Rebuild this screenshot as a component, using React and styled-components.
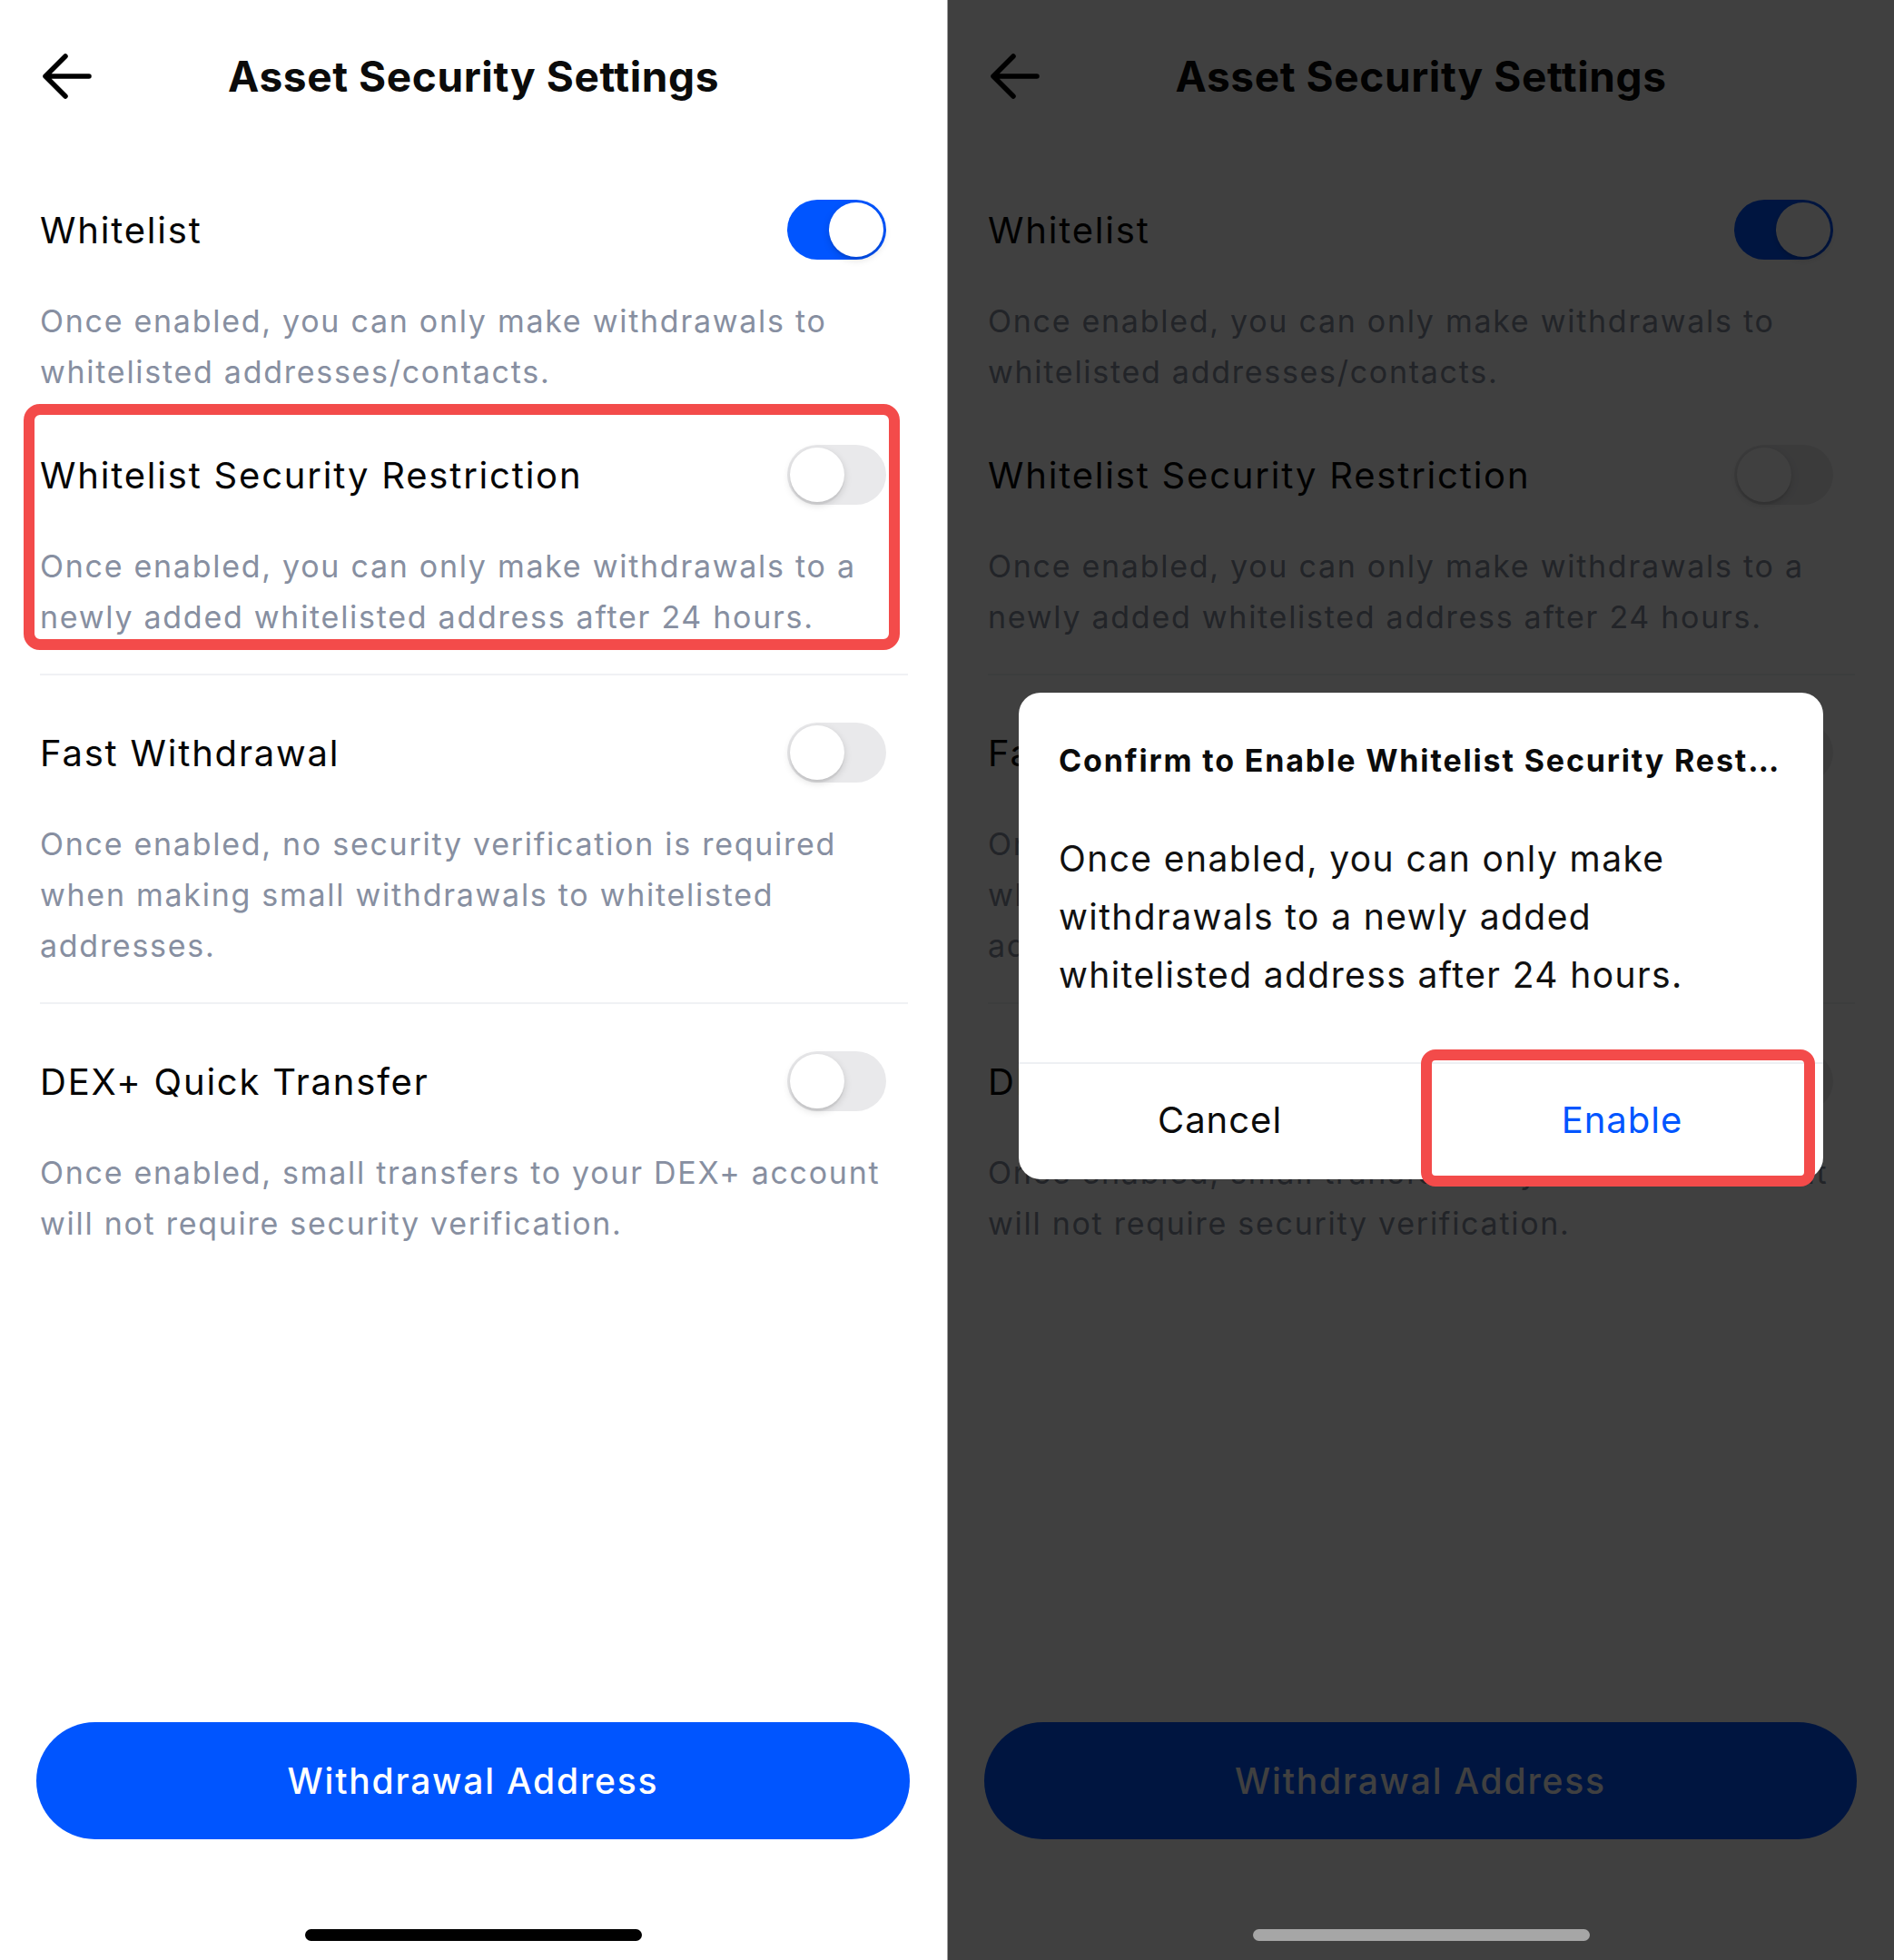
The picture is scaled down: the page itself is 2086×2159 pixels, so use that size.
import React from "react";
import styled, { createGlobalStyle } from "styled-components";

const GlobalStyle = createGlobalStyle`
  html, body {
    margin: 0;
    padding: 0;
  }
  body {
    font-family: Inter, "Noto Sans", sans-serif;
    background: #fff;
    -webkit-font-smoothing: antialiased;
  }
`;

const Page = styled.div`
  display: flex;
  width: 2086px;
  height: 2159px;
  overflow: hidden;
`;

const Panel = styled.div`
  position: relative;
  flex-shrink: 0;
  width: ${p => p.$width}px;
  height: 100%;
  display: flex;
  flex-direction: column;
  background: #fff;
  border-right: ${p => (p.$edge ? "1px solid #a3a3a3" : "none")};
`;

const Header = styled.header`
  height: 168px;
  display: grid;
  grid-template-columns: 1fr auto 1fr;
  align-items: center;
  padding: 0 44px;
`;

const BackButton = styled.button`
  justify-self: start;
  display: flex;
  padding: 0;
  border: none;
  background: none;
  color: #000;
`;

const Title = styled.h1`
  margin: 0;
  font-size: 46px;
  font-weight: 700;
  color: #0b0b0b;
  letter-spacing: 0.6px;
`;

const Content = styled.main`
  padding: 0 43px 0 44px;
`;

const Group = styled.div`
  padding-bottom: 34px;
  border-bottom: ${p => (p.$divider ? "2px solid #f0f1f4" : "none")};
`;

const Section = styled.section`
  position: relative;
  padding-top: 52px;
`;

const Row = styled.div`
  height: 66px;
  display: flex;
  align-items: center;
  justify-content: space-between;
`;

const Label = styled.span`
  font-size: 40px;
  color: #050505;
  letter-spacing: 1.8px;
`;

const Toggle = styled.div`
  position: relative;
  flex-shrink: 0;
  width: 109px;
  height: 66px;
  margin-right: 24px;
  border-radius: 33px;
  background: ${p => (p.$on ? "#0055ff" : "#e9e9eb")};

  &::after {
    content: "";
    position: absolute;
    top: 3px;
    left: ${p => (p.$on ? "46px" : "3px")};
    width: 60px;
    height: 60px;
    border-radius: 50%;
    background: #fff;
    box-shadow: 0 3px 8px rgba(0, 0, 0, 0.15), 0 3px 1px rgba(0, 0, 0, 0.06);
  }
`;

const Description = styled.p`
  margin: 40px 0 0;
  padding-right: 20px;
  font-size: 34px;
  line-height: 56px;
  color: #878fa1;
  letter-spacing: 1.72px;
`;

const Highlight = styled.div`
  position: absolute;
  inset: ${p => p.$inset};
  border: 12px solid #f34b4a;
  border-radius: ${p => p.$radius}px;
  pointer-events: none;
`;

const Spacer = styled.div`
  flex: 1;
`;

const PrimaryButton = styled.button`
  height: 129px;
  margin: 0 41px 0 40px;
  border: none;
  border-radius: 65px;
  background: #0055ff;
  color: #fff;
  font-family: inherit;
  font-size: 39px;
  font-weight: 500;
  letter-spacing: 1.8px;
`;

const Footer = styled.footer`
  height: 133px;
  display: flex;
  justify-content: center;
`;

const HomeBar = styled.div`
  position: relative;
  z-index: 2;
  width: 371px;
  height: 13px;
  margin-top: 99px;
  border-radius: 7px;
  background: ${p => (p.$dim ? "#a6a6a6" : "#000")};
`;

const Overlay = styled.div`
  position: absolute;
  inset: 0;
  z-index: 1;
  display: flex;
  justify-content: center;
  align-items: flex-start;
  padding-top: 763px;
  background: rgba(0, 0, 0, 0.75);
`;

const Dialog = styled.div`
  width: 886px;
  background: #fff;
  border-radius: 24px;
`;

const DialogBody = styled.div`
  padding: 53px 46px 64px 44px;
`;

const DialogTitle = styled.div`
  font-size: 34px;
  font-weight: 700;
  line-height: 44px;
  color: #0b0b0b;
  letter-spacing: 1.85px;
  white-space: nowrap;
  overflow: hidden;
  text-overflow: ellipsis;
`;

const DialogText = styled.p`
  max-width: 760px;
  margin: 54px 0 0;
  font-size: 39px;
  line-height: 64px;
  color: #111;
  letter-spacing: 1.4px;
`;

const DialogActions = styled.div`
  display: grid;
  grid-template-columns: 1fr 1fr;
  height: 127px;
  border-top: 2px solid #eef0f3;
`;

const DialogButton = styled.button`
  position: relative;
  padding: 0 0 5px;
  border: none;
  background: none;
  font-family: inherit;
  font-size: 40px;
  letter-spacing: 1px;
  color: ${p => (p.$primary ? "#0055ff" : "#0b0b0b")};
`;

const BackArrow = () => (
  <svg width="60" height="50" viewBox="0 0 60 50" fill="none">
    <path
      d="M6 25H54M28 3L6 25L28 47"
      stroke="currentColor"
      strokeWidth="5.5"
      strokeLinecap="round"
      strokeLinejoin="round"
    />
  </svg>
);

const settings = [
  [
    {
      label: "Whitelist",
      on: true,
      text: "Once enabled, you can only make withdrawals to whitelisted addresses/contacts."
    },
    {
      label: "Whitelist Security Restriction",
      on: false,
      marked: true,
      text: "Once enabled, you can only make withdrawals to a newly added whitelisted address after 24 hours."
    }
  ],
  [
    {
      label: "Fast Withdrawal",
      on: false,
      text: "Once enabled, no security verification is required when making small withdrawals to whitelisted addresses."
    }
  ],
  [
    {
      label: "DEX+ Quick Transfer",
      on: false,
      text: "Once enabled, small transfers to your DEX+ account will not require security verification."
    }
  ]
];

const Screen = ({ annotated, dimmed }) => (
  <>
    <Header>
      <BackButton aria-label="Back">
        <BackArrow />
      </BackButton>
      <Title>Asset Security Settings</Title>
    </Header>
    <Content>
      {settings.map((group, i) => (
        <Group key={i} $divider={i < settings.length - 1}>
          {group.map(item => (
            <Section key={item.label}>
              <Row>
                <Label>{item.label}</Label>
                <Toggle $on={item.on} />
              </Row>
              <Description>{item.text}</Description>
              {annotated && item.marked && (
                <Highlight $inset="7px 9px -8px -18px" $radius={18} />
              )}
            </Section>
          ))}
        </Group>
      ))}
    </Content>
    <Spacer />
    <PrimaryButton>Withdrawal Address</PrimaryButton>
    <Footer>
      <HomeBar $dim={dimmed} />
    </Footer>
  </>
);

const ConfirmDialog = () => (
  <Overlay>
    <Dialog>
      <DialogBody>
        <DialogTitle>Confirm to Enable Whitelist Security Restriction</DialogTitle>
        <DialogText>
          Once enabled, you can only make withdrawals to a newly added whitelisted address
          after 24 hours.
        </DialogText>
      </DialogBody>
      <DialogActions>
        <DialogButton>Cancel</DialogButton>
        <DialogButton $primary>
          Enable
          <Highlight $inset="-16px 9px -8px 0" $radius={16} />
        </DialogButton>
      </DialogActions>
    </Dialog>
  </Overlay>
);

const App = () => (
  <Page>
    <GlobalStyle />
    <Panel $width={1043} $edge>
      <Screen annotated />
    </Panel>
    <Panel $width={1042}>
      <Screen dimmed />
      <ConfirmDialog />
    </Panel>
  </Page>
);

export default App;
